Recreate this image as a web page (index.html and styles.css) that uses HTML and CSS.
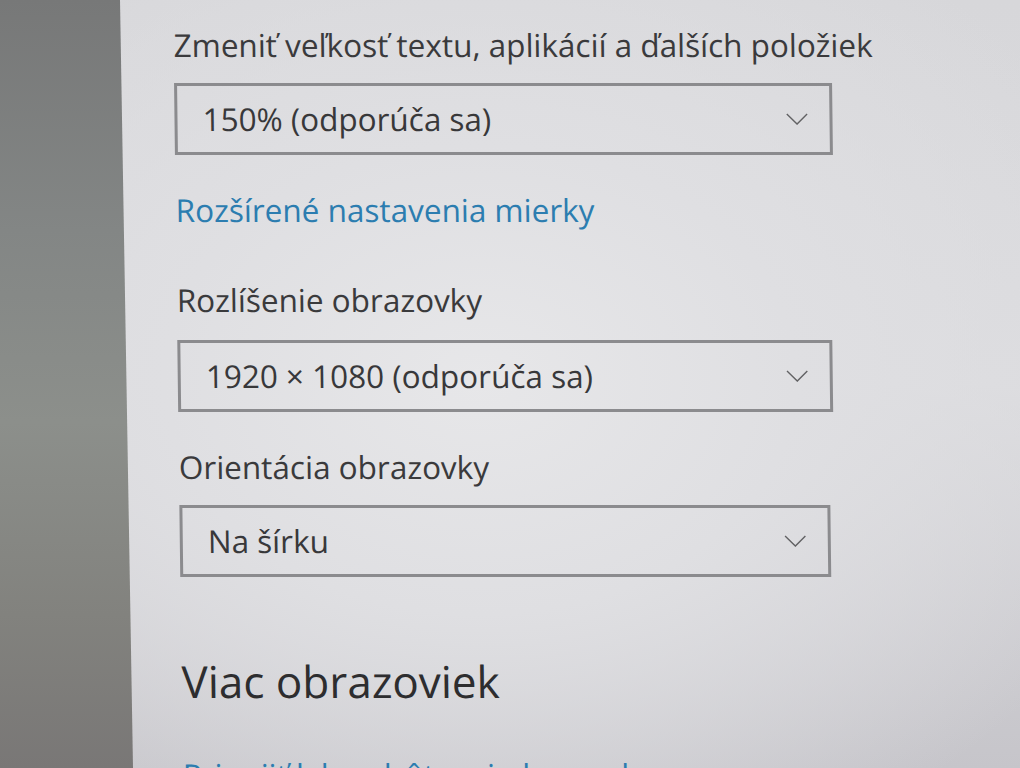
FILE: index.html
```html
<!DOCTYPE html>
<html lang="sk">
<head>
<meta charset="utf-8">
<title>Obrazovka</title>
<link rel="stylesheet" href="styles.css">
</head>
<body>
<div class="screen">
  <div class="sidebar"></div>
  <main class="panel">
    <div class="content">
      <div class="label l1">Zmeniť veľkosť textu, aplikácií a ďalších položiek</div>
      <div class="select s1">
        <span class="value">150% (odporúča sa)</span>
        <svg class="chev" viewBox="0 0 24 13" width="23" height="12"><path d="M1 1 L12 12 L23 1" fill="none" stroke="#626264" stroke-width="1.5"/></svg>
      </div>
      <a class="link l-scale" href="#">Rozšírené nastavenia mierky</a>
      <div class="label l2">Rozlíšenie obrazovky</div>
      <div class="select s2">
        <span class="value">1920 × 1080 (odporúča sa)</span>
        <svg class="chev" viewBox="0 0 24 13" width="23" height="12"><path d="M1 1 L12 12 L23 1" fill="none" stroke="#626264" stroke-width="1.5"/></svg>
      </div>
      <div class="label l3">Orientácia obrazovky</div>
      <div class="select s3">
        <span class="value">Na šírku</span>
        <svg class="chev" viewBox="0 0 24 13" width="23" height="12"><path d="M1 1 L12 12 L23 1" fill="none" stroke="#626264" stroke-width="1.5"/></svg>
      </div>
      <h2 class="heading">Viac obrazoviek</h2>
      <a class="link l-bottom" href="#">Pripojiť k bezdrôtovej obrazovke</a>
    </div>
  </main>
</div>
</body>
</html>
```

FILE: styles.css
```css
* { box-sizing: border-box; }
html, body {
  margin: 0;
  padding: 0;
  width: 1020px;
  height: 768px;
  overflow: hidden;
}
body {
  font-family: "Open Sans", "Noto Sans", sans-serif;
  color: #3b3b3d;
  background: #d9d9dc;
}
.screen {
  display: flex;
  width: 1020px;
  height: 768px;
  background:
    radial-gradient(ellipse 700px 520px at 480px 380px, #e7e7e9 0%, #dfdfe2 45%, rgba(214,213,218,0) 100%),
    linear-gradient(180deg, #d7d7da 0%, #dbdbde 50%, #c6c5ca 100%);
}
.sidebar {
  flex: 0 0 133px;
  height: 768px;
  background: linear-gradient(180deg, #777878 0%, #838685 30%, #8c8f8b 55%, #82827e 80%, #797776 100%);
  clip-path: polygon(0 0, 120px 0, 133px 100%, 0 100%);
}
.panel {
  flex: 1;
  margin-left: -133px;
  padding-left: 173px;
}
.content {
  width: 680px;
  transform: skewX(0.72deg);
  transform-origin: 0 0;
  display: flex;
  flex-direction: column;
  align-items: flex-start;
}
.label, .link, .value {
  font-size: 31.5px;
  line-height: 40px;
  white-space: nowrap;
}
.label { color: #3a3a3c; }
.l1 { margin-top: 25px; }
.l2 { margin-top: 50px; }
.l3 { margin-top: 35px; }
.select {
  width: 658px;
  height: 72px;
  border: 3px solid #8b8b8e;
  display: flex;
  align-items: center;
  justify-content: space-between;
  padding: 0 21px 0 25px;
}
.s1 { margin-top: 18px; }
.s2 { margin-top: 20px; width: 655px; }
.s3 { margin-top: 18px; width: 651px; }
.value { color: #38383a; }
.chev { display: block; }
.link {
  color: #2c7db0;
  text-decoration: none;
}
.l-scale { margin-top: 35px; }
.heading {
  margin: 78px 0 0 0;
  font-weight: 400;
  font-size: 44px;
  line-height: 52px;
  color: #2d2d2f;
}
.l-bottom { margin-top: 48px; }
```
